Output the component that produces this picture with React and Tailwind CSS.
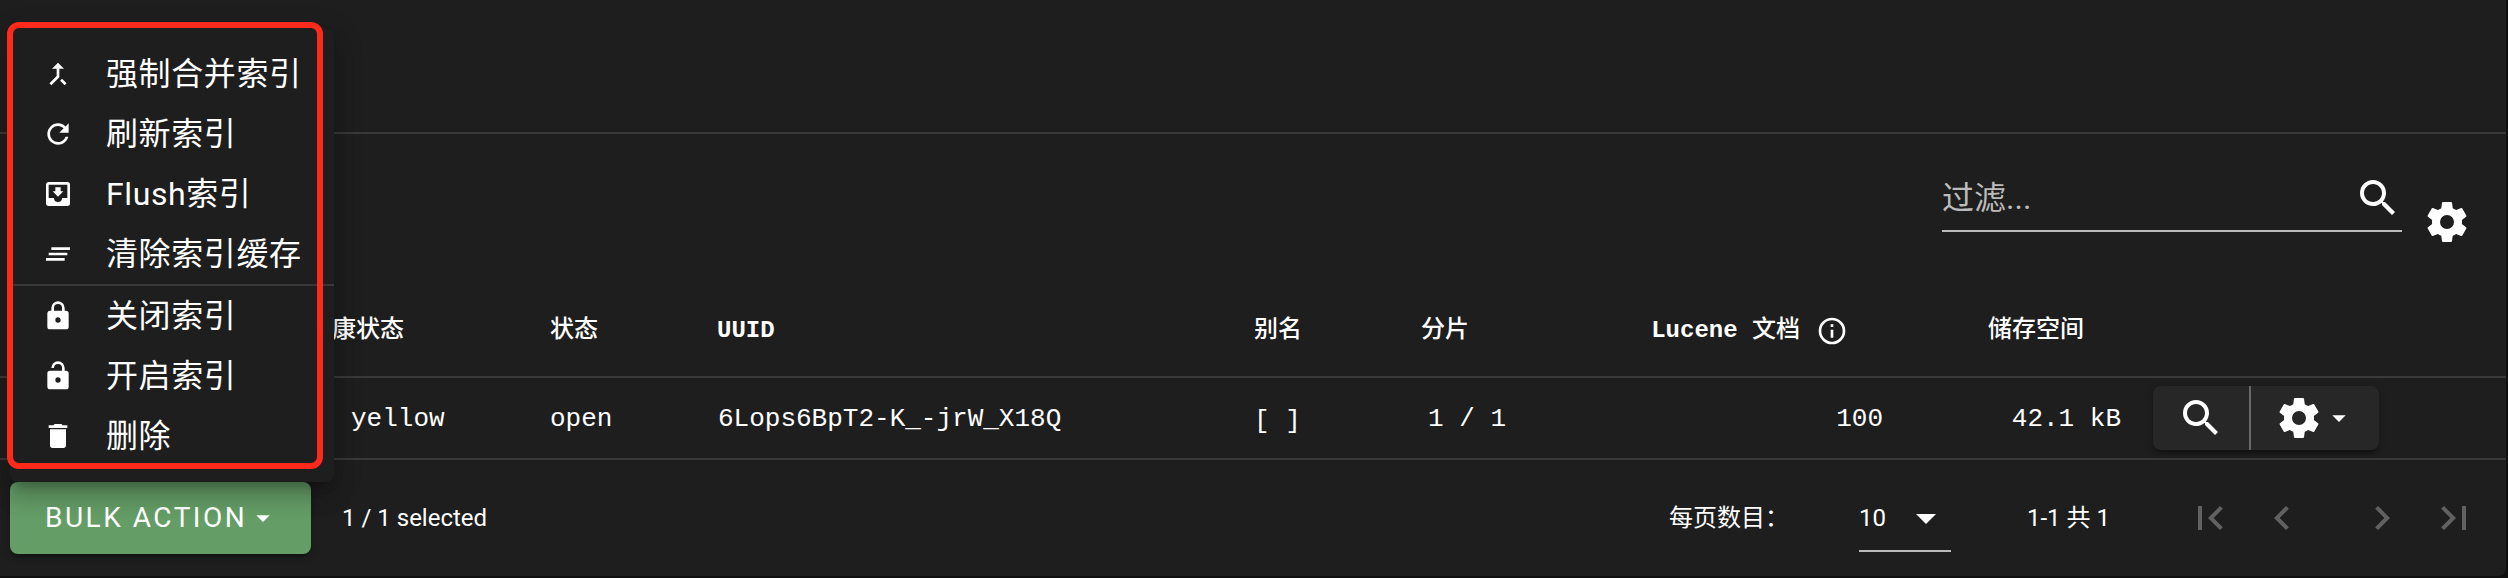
const ICONS = {
  merge:
    'M17,20.41L18.41,19L15,15.59L13.59,17M7.5,8H11V13.59L5.59,19L7,20.41L13,14.41V8H16.5L12,3.5',
  refresh:
    'M17.65,6.35C16.2,4.9 14.21,4 12,4A8,8 0 0,0 4,12A8,8 0 0,0 12,20C15.73,20 18.84,17.45 19.73,14H17.65C16.83,16.33 14.61,18 12,18A6,6 0 0,1 6,12A6,6 0 0,1 12,6C13.66,6 15.14,6.69 16.22,7.78L13,11H20V4L17.65,6.35Z',
  inboxDown:
    'M16,10H14V7H10V10H8L12,14M19,15H15A3,3 0 0,1 12,18A3,3 0 0,1 9,15H5V5H19M19,3H5C3.89,3 3,3.9 3,5V19A2,2 0 0,0 5,21H19A2,2 0 0,0 21,19V5A2,2 0 0,0 19,3Z',
  clearAll: 'M5,13H19V11H5M3,17H17V15H3M7,7V9H21V7',
  lock:
    'M12,17A2,2 0 0,0 14,15C14,13.89 13.1,13 12,13A2,2 0 0,0 10,15A2,2 0 0,0 12,17M18,8A2,2 0 0,1 20,10V20A2,2 0 0,1 18,22H6A2,2 0 0,1 4,20V10C4,8.89 4.9,8 6,8H7V6A5,5 0 0,1 12,1A5,5 0 0,1 17,6V8H18M12,3A3,3 0 0,0 9,6V8H15V6A3,3 0 0,0 12,3Z',
  lockOpen:
    'M18,8A2,2 0 0,1 20,10V20A2,2 0 0,1 18,22H6C4.89,22 4,21.1 4,20V10A2,2 0 0,1 6,8H15V6A3,3 0 0,0 12,3A3,3 0 0,0 9,6H7A5,5 0 0,1 12,1A5,5 0 0,1 17,6V8H18M12,17A2,2 0 0,0 14,15A2,2 0 0,0 12,13A2,2 0 0,0 10,15A2,2 0 0,0 12,17Z',
  trash: 'M19,4H15.5L14.5,3H9.5L8.5,4H5V6H19M6,19A2,2 0 0,0 8,21H16A2,2 0 0,0 18,19V7H6V19Z',
  info:
    'M11,9H13V7H11M12,20C7.59,20 4,16.41 4,12C4,7.59 7.59,4 12,4C16.41,4 20,7.59 20,12C20,16.41 16.41,20 12,20M12,2A10,10 0 0,0 2,12A10,10 0 0,0 12,22A10,10 0 0,0 22,12A10,10 0 0,0 12,2M11,17H13V11H11V17Z',
  magnify:
    'M9.5,3A6.5,6.5 0 0,1 16,9.5C16,11.11 15.41,12.59 14.44,13.73L14.71,14H15.5L20.5,19L19,20.5L14,15.5V14.71L13.73,14.44C12.59,15.41 11.11,16 9.5,16A6.5,6.5 0 0,1 3,9.5A6.5,6.5 0 0,1 9.5,3M9.5,5C7,5 5,7 5,9.5C5,12 7,14 9.5,14C12,14 14,12 14,9.5C14,7 12,5 9.5,5Z',
  cog:
    'M12,15.5A3.5,3.5 0 0,1 8.5,12A3.5,3.5 0 0,1 12,8.5A3.5,3.5 0 0,1 15.5,12A3.5,3.5 0 0,1 12,15.5M19.43,12.97C19.47,12.65 19.5,12.33 19.5,12C19.5,11.67 19.47,11.34 19.43,11L21.54,9.37C21.73,9.22 21.78,8.95 21.66,8.73L19.66,5.27C19.54,5.05 19.27,4.96 19.05,5.05L16.56,6.05C16.04,5.66 15.5,5.32 14.87,5.07L14.5,2.42C14.46,2.18 14.25,2 14,2H10C9.75,2 9.54,2.18 9.5,2.42L9.13,5.07C8.5,5.32 7.96,5.66 7.44,6.05L4.95,5.05C4.73,4.96 4.46,5.05 4.34,5.27L2.34,8.73C2.21,8.95 2.27,9.22 2.46,9.37L4.57,11C4.53,11.34 4.5,11.67 4.5,12C4.5,12.33 4.53,12.65 4.57,12.97L2.46,14.63C2.27,14.78 2.21,15.05 2.34,15.27L4.34,18.73C4.46,18.95 4.73,19.03 4.95,18.95L7.44,17.94C7.96,18.34 8.5,18.68 9.13,18.93L9.5,21.58C9.54,21.82 9.75,22 10,22H14C14.25,22 14.46,21.82 14.5,21.58L14.87,18.93C15.5,18.67 16.04,18.34 16.56,17.94L19.05,18.95C19.27,19.03 19.54,18.95 19.66,18.73L21.66,15.27C21.78,15.05 21.73,14.78 21.54,14.63L19.43,12.97Z',
  down: 'M7,10L12,15L17,10H7Z',
  first: 'M18.41,16.59L13.82,12L18.41,7.41L17,6L11,12L17,18L18.41,16.59M6,6H8V18H6V6Z',
  prev: 'M15.41,16.58L10.83,12L15.41,7.41L14,6L8,12L14,18L15.41,16.58Z',
  next: 'M8.59,16.58L13.17,12L8.59,7.41L10,6L16,12L10,18L8.59,16.58Z',
  last: 'M5.59,7.41L10.18,12L5.59,16.59L7,18L13,12L7,6L5.59,7.41M16,6H18V18H16V6Z',
};

function Icon({ name, className }) {
  return (
    <svg viewBox="0 0 24 24" fill="currentColor" className={`shrink-0 ${className}`}>
      <path d={ICONS[name]} />
    </svg>
  );
}

const COLUMNS = 'grid grid-cols-[535px_167px_536px_116px_169px_377px_237px_369px] items-center';

function MenuItem({ icon, label }) {
  return (
    <li className="flex h-[60px] items-center gap-8 px-8 text-[32px] tracking-[0.6px] whitespace-nowrap">
      <Icon name={icon} className="size-8" />
      <span>{label}</span>
    </li>
  );
}

function BulkMenu() {
  return (
    <div className="absolute top-7 left-[10px] w-[324px] rounded-lg bg-[#1e1e1e] py-4 shadow-[0_10px_10px_-6px_rgba(0,0,0,0.2),0_16px_20px_2px_rgba(0,0,0,0.14),0_6px_28px_4px_rgba(0,0,0,0.12)]">
      <ul>
        <MenuItem icon="merge" label="强制合并索引" />
        <MenuItem icon="refresh" label="刷新索引" />
        <MenuItem icon="inboxDown" label="Flush索引" />
        <MenuItem icon="clearAll" label="清除索引缓存" />
      </ul>
      <hr className="h-0.5 border-0 bg-[#393939]" />
      <ul>
        <MenuItem icon="lock" label="关闭索引" />
        <MenuItem icon="lockOpen" label="开启索引" />
        <MenuItem icon="trash" label="删除" />
      </ul>
    </div>
  );
}

function TableHeader() {
  return (
    <div className={`${COLUMNS} h-[98px] border-b-2 border-[#393939] pt-1.5 font-['Liberation_Mono','Noto_Sans_CJK_SC',monospace] text-2xl font-medium whitespace-nowrap`}>
      <div className="pl-[308px]">健康状态</div>
      <div className="pl-[15px]">状态</div>
      <div className="pl-[15px] font-bold">UUID</div>
      <div className="pl-4">别名</div>
      <div className="pr-[54px] text-right">分片</div>
      <div className="flex items-center justify-end gap-4 pr-[52px]">
        <span>
          <b className="font-bold">Lucene</b> 文档
        </span>
        <Icon name="info" className="size-8" />
      </div>
      <div className="pr-[53px] text-right">储存空间</div>
      <div />
    </div>
  );
}

function TableRow() {
  return (
    <div className={`${COLUMNS} h-[82px] border-b-2 border-[#393939] font-['Liberation_Mono',monospace] text-[26px] whitespace-pre`}>
      <div className="pt-0.5 pl-[351px]">yellow</div>
      <div className="pt-0.5 pl-[15px]">open</div>
      <div className="pt-0.5 pl-4">6Lops6BpT2-K_-jrW_X18Q</div>
      <div className="pt-1.5 pl-4">[ ]</div>
      <div className="pt-0.5 pr-[17px] text-right">1 / 1</div>
      <div className="pt-0.5 pr-[17px] text-right">100</div>
      <div className="pt-0.5 pr-4 text-right">42.1 kB</div>
      <div className="pl-4">
        <div className="flex h-16 w-[226px] rounded-lg bg-[#272727] shadow-[0_6px_2px_-4px_rgba(0,0,0,0.2),0_4px_4px_0_rgba(0,0,0,0.14),0_2px_10px_0_rgba(0,0,0,0.12)]">
          <button className="flex w-[98px] items-center border-r-2 border-[#686868] pl-6">
            <Icon name="magnify" className="size-12" />
          </button>
          <button className="flex items-center pl-6">
            <Icon name="cog" className="size-12" />
            <Icon name="down" className="size-8" />
          </button>
        </div>
      </div>
    </div>
  );
}

function Footer() {
  return (
    <div className="flex h-[116px] items-center pl-[10px] text-2xl whitespace-nowrap">
      <button className="flex h-[72px] w-[301px] items-center rounded-lg bg-[#649d66] pl-[35px] text-[28px] tracking-[2.5px] shadow-[0_6px_2px_-4px_rgba(0,0,0,0.2),0_4px_4px_0_rgba(0,0,0,0.14),0_2px_10px_0_rgba(0,0,0,0.12)]">
        <span>BULK ACTION</span>
        <Icon name="down" className="size-8" />
      </button>
      <span className="ml-[31px]">1 / 1 selected</span>
      <div className="ml-auto flex items-center">
        <span className="w-[190px]">每页数目：</span>
        <div className="mb-2 flex h-[76px] w-[92px] items-center border-b-2 border-[#bbbbbb] pt-2.5">
          <span className="w-[43px]">10</span>
          <Icon name="down" className="size-12" />
        </div>
        <span className="ml-[76px] w-[159px]">1-1 共 1</span>
        <div className="flex w-[320px] items-center text-[#616161]">
          <Icon name="first" className="size-12" />
          <Icon name="prev" className="ml-6 size-12" />
          <Icon name="next" className="ml-[52px] size-12" />
          <Icon name="last" className="ml-6 size-12" />
        </div>
      </div>
    </div>
  );
}

export default function App() {
  return (
    <div className="relative h-[578px] w-[2508px] overflow-hidden bg-[#101010] font-[Roboto,'Noto_Sans_CJK_SC',sans-serif] text-white">
      <div className="flex h-[576px] w-[2506px] flex-col rounded-br-lg bg-[#1e1e1e]">
        <div className="h-[134px] border-b-2 border-[#393939]" />
        <div className="flex h-[146px] justify-end gap-[21px] pr-[35px]">
          <div className="mt-8 flex h-[66px] w-[460px] items-center justify-between border-b-2 border-[#bbbbbb] text-[32px] text-[#bbbbbb]">
            <span>过滤...</span>
            <Icon name="magnify" className="size-12 text-white" />
          </div>
          <Icon name="cog" className="mt-16 size-12" />
        </div>
        <TableHeader />
        <TableRow />
        <Footer />
      </div>
      <BulkMenu />
      <div className="absolute top-[22px] left-[7px] h-[447px] w-[316px] rounded-xl border-[6px] border-[#ff2a1c]" />
    </div>
  );
}
